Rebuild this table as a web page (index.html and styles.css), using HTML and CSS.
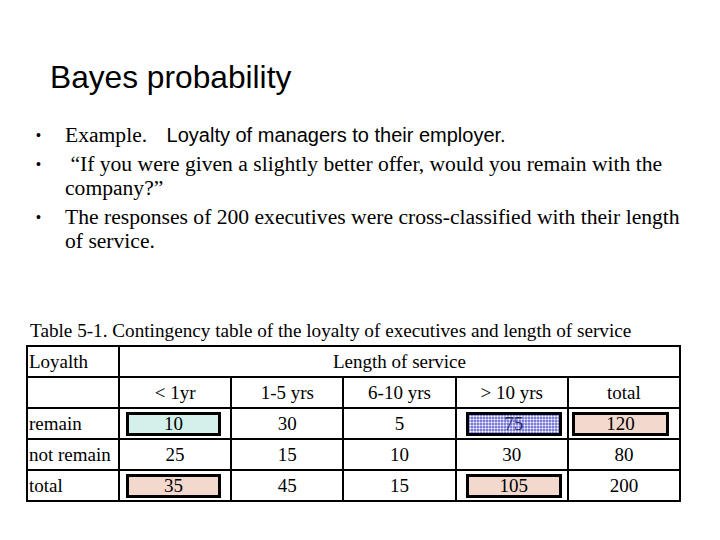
FILE: index.html
```html
<!DOCTYPE html>
<html>
<head>
<meta charset="utf-8">
<link rel="stylesheet" href="styles.css">
</head>
<body>
<div class="slide">
  <h1 class="title">Bayes probability</h1>
  <ul class="points">
    <li><span class="serif">Example.</span> <span class="sans">Loyalty of managers to their employer.</span></li>
    <li>&nbsp;“If you were given a slightly better offer, would you remain with the company?”</li>
    <li>The responses of 200 executives were cross-classified with their length of service.</li>
  </ul>
  <div class="caption">Table 5-1. Contingency table of the loyalty of executives and length of service</div>
  <table class="ct">
    <colgroup>
      <col class="c0"><col class="cn"><col class="cn"><col class="cn"><col class="cn"><col class="cn">
    </colgroup>
    <tr><td class="lbl">Loyalth</td><td colspan="5">Length of service</td></tr>
    <tr><td class="lbl"></td><td>&lt; 1yr</td><td>1-5 yrs</td><td>6-10 yrs</td><td>&gt; 10 yrs</td><td>total</td></tr>
    <tr><td class="lbl">remain</td><td><div class="box cyan b1">10</div></td><td>30</td><td>5</td><td><div class="box dots b2">75</div></td><td><div class="box peach b3">120</div></td></tr>
    <tr><td class="lbl">not remain</td><td>25</td><td>15</td><td>10</td><td>30</td><td>80</td></tr>
    <tr><td class="lbl">total</td><td><div class="box peach b1">35</div></td><td>45</td><td>15</td><td><div class="box peach b2">105</div></td><td>200</td></tr>
  </table>
</div>
</body>
</html>
```
FILE: styles.css
```css
html, body {
  margin: 0;
  padding: 0;
  background: #fff;
}
.slide {
  width: 720px;
  height: 540px;
  padding-top: 60px;
  box-sizing: border-box;
  color: #000;
  font-family: "Liberation Serif", serif;
}
.title {
  margin: 0 0 0 50px;
  font-family: "Liberation Sans", Arial, sans-serif;
  font-weight: normal;
  font-size: 31.7px;
  line-height: 34px;
}
.points {
  list-style: none;
  margin: 29px 0 0 0;
  padding: 0 0 0 65px;
  font-size: 21.6px;
  line-height: 24px;
  width: 630px;
}
.points li {
  position: relative;
  margin-top: 5px;
}
.points li::before {
  content: "•";
  position: absolute;
  left: -29px;
  top: 0;
  font-family: "Liberation Sans", sans-serif;
  font-size: 14px;
}
.sans {
  font-family: "Liberation Sans", Arial, sans-serif;
  font-size: 20px;
  margin-left: 14px;
}
.caption {
  margin: 68px 0 0 30px;
  font-size: 19.2px;
  line-height: 20px;
}
.ct {
  margin: 4px 0 0 26px;
  border-collapse: collapse;
  table-layout: fixed;
  width: 655px;
  font-size: 19px;
}
.c0 { width: 92px; }
.ct td {
  border: 2px solid #000;
  height: 29px;
  padding: 0;
  text-align: center;
  line-height: 22px;
}
.ct td.lbl {
  text-align: left;
  padding-left: 1px;
}
.box {
  border: 3px solid #000;
  height: 18px;
  line-height: 18px;
  box-sizing: content-box;
}
.b1 { margin: 0 9px 0 6px; }
.b2 { margin: 0 5px 0 9px; }
.b3 { margin: 0 10px 0 3px; }
.cyan { background: #d3f1ea; }
.peach { background: #f3d8cd; }
.dots {
  color: #2a2a70;
  background:
    radial-gradient(circle, #ffffff 0.9px, transparent 1.1px) 0 0 / 3px 3px,
    #7e7ed8;
}
```
